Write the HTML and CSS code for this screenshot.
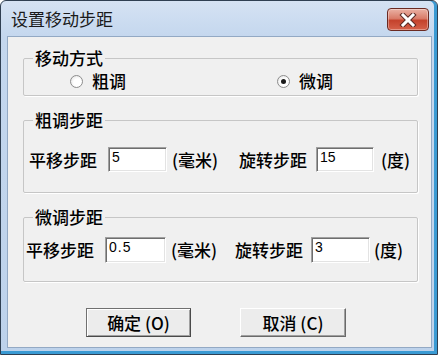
FILE: index.html
```html
<!DOCTYPE html>
<html lang="zh">
<head>
<meta charset="utf-8">
<title>设置移动步距</title>
<link rel="stylesheet" href="styles.css">
</head>
<body>
<div class="window">
  <div class="titlebar">
    <span class="title">设置移动步距</span>
    <div class="close">
      <svg width="20" height="14" viewBox="0 0 20 14">
        <path d="M5 2 L15 12 M15 2 L5 12" stroke="#5a2a24" stroke-width="5" stroke-linecap="square" fill="none"/>
        <path d="M5 2 L15 12 M15 2 L5 12" stroke="#ffffff" stroke-width="3" stroke-linecap="square" fill="none"/>
      </svg>
    </div>
  </div>
  <div class="client">
    <fieldset class="group g1">
      <legend>移动方式</legend>
      <div class="radios">
        <div class="radio"><span class="dot"></span><span>粗调</span></div>
        <div class="radio checked"><span class="dot"></span><span>微调</span></div>
      </div>
    </fieldset>
    <fieldset class="group g2">
      <legend>粗调步距</legend>
      <div class="row">
        <span class="lbl">平移步距</span>
        <span class="input in1">5</span>
        <span class="unit mm">(毫米)</span>
        <span class="lbl">旋转步距</span>
        <span class="input in2">15</span>
        <span class="unit deg">(度)</span>
      </div>
    </fieldset>
    <fieldset class="group g3">
      <legend>微调步距</legend>
      <div class="row">
        <span class="lbl">平移步距</span>
        <span class="input in1">0.5</span>
        <span class="unit mm">(毫米)</span>
        <span class="lbl">旋转步距</span>
        <span class="input in2">3</span>
        <span class="unit deg">(度)</span>
      </div>
    </fieldset>
    <div class="buttons">
      <div class="btn default">确定 (O)</div>
      <div class="btn">取消 (C)</div>
    </div>
  </div>
</div>
</body>
</html>
```

FILE: styles.css
```css
* { box-sizing: border-box; }
html, body { margin: 0; padding: 0; background: #ffffff; }
body {
  font-family: "Noto Sans CJK SC", "Noto Sans", sans-serif;
  font-size: 17px;
  font-weight: 500;
  color: #000;
}
.window {
  width: 438px;
  height: 355px;
  display: flex;
  flex-direction: column;
  border: 1px solid #2f3f52;
  border-radius: 6px 6px 0 0;
  background: linear-gradient(to bottom, #d5e2f3 0px, #c4d7ee 36px, #bdd2eb 100%);
  box-shadow: inset 0 -3px 0 #3a9ad3, inset -3px 0 0 #3a9ad3;
}
.titlebar {
  height: 35px;
  display: flex;
  align-items: center;
  justify-content: space-between;
  padding-left: 10px;
  padding-right: 8px;
  flex: none;
}
.title { line-height: 20px; color: #1a1a1a; font-weight: 400; }
.close {
  width: 42px;
  height: 23px;
  align-self: flex-start;
  margin-top: 7px;
  border: 1px solid #6b2a22;
  border-radius: 4px;
  background: linear-gradient(to bottom, #eab1a4 0%, #d97c69 45%, #c4422c 55%, #d5614a 100%);
  display: flex;
  align-items: center;
  justify-content: center;
  box-shadow: inset 0 0 0 1px rgba(255,255,255,0.35);
}
.client {
  flex: 1;
  margin: 0 5px 6px 6px;
  border: 1px solid #93a9c4;
  background: #f0f0f0;
  padding: 12px 13px 0 15px;
  display: flex;
  flex-direction: column;
}
.group {
  margin: 0;
  padding: 0;
  border: 1px solid #c6c6c6;
  border-radius: 2px;
  box-shadow: 1px 1px 0 #ffffff;
  min-width: 0;
}
.group legend {
  margin-left: 9px;
  padding: 0 2px;
  line-height: 18px;
}
.g2, .g3 { margin-top: 15px; }
.radios {
  display: grid;
  grid-template-columns: 207px auto;
  line-height: 20px;
  padding: 4px 0 4px 46px;
}
.radio { display: flex; align-items: center; }
.dot {
  width: 13px;
  height: 13px;
  border-radius: 50%;
  border: 1px solid #8d8d8d;
  background: radial-gradient(circle at 60% 60%, #ffffff 40%, #dcdcdc 100%);
  margin-right: 9px;
  position: relative;
  flex: none;
}
.checked .dot::after {
  content: "";
  position: absolute;
  left: 3px;
  top: 3px;
  width: 5px;
  height: 5px;
  border-radius: 50%;
  background: #1b1b1b;
}
.row { display: flex; align-items: center; }
.g2 .row { padding: 18px 0 20px 5px; }
.g3 .row { padding: 11px 0 18px 2px; }
.lbl { line-height: 20px; flex: none; }
.input {
  height: 25px;
  background: #fff;
  border: 1px solid;
  border-color: #a0a0a0 #ffffff #ffffff #a0a0a0;
  box-shadow: inset 1px 1px 0 #6e6e6e, inset -1px -1px 0 #e3e3e3;
  font-family: "Liberation Sans", Arial, sans-serif;
  font-weight: 400;
  font-size: 14px;
  line-height: 15px;
  padding: 2px 0 0 3px;
  flex: none;
}
.g3 .input { height: 26px; letter-spacing: 1px; }
.unit { line-height: 20px; flex: none; }
.g2 .in1 { margin-left: 11px; width: 59px; }
.g2 .mm { margin-left: 5px; width: 67px; }
.g2 .in2 { margin-left: 9px; width: 58px; }
.g2 .deg { margin-left: 7px; }
.g3 .in1 { margin-left: 11px; width: 61px; }
.g3 .mm { margin-left: 5px; width: 64px; }
.g3 .in2 { margin-left: 8px; width: 59px; }
.g3 .deg { margin-left: 4px; }
.buttons {
  margin-top: 26px;
  display: flex;
  padding-left: 63px;
  gap: 49px;
}
.btn {
  width: 106px;
  height: 29px;
  display: flex;
  align-items: center;
  justify-content: center;
  background: #ececec;
  border: 1px solid;
  border-color: #ffffff #6a6a6a #6a6a6a #ffffff;
  box-shadow: inset -1px -1px 0 #a0a0a0;
  line-height: 20px;
}
.btn.default {
  width: 105px;
  border-color: #707070 #4a4a4a #4a4a4a #707070;
  box-shadow: inset 1px 1px 0 #ffffff, inset -1px -1px 0 #a0a0a0;
}
```
